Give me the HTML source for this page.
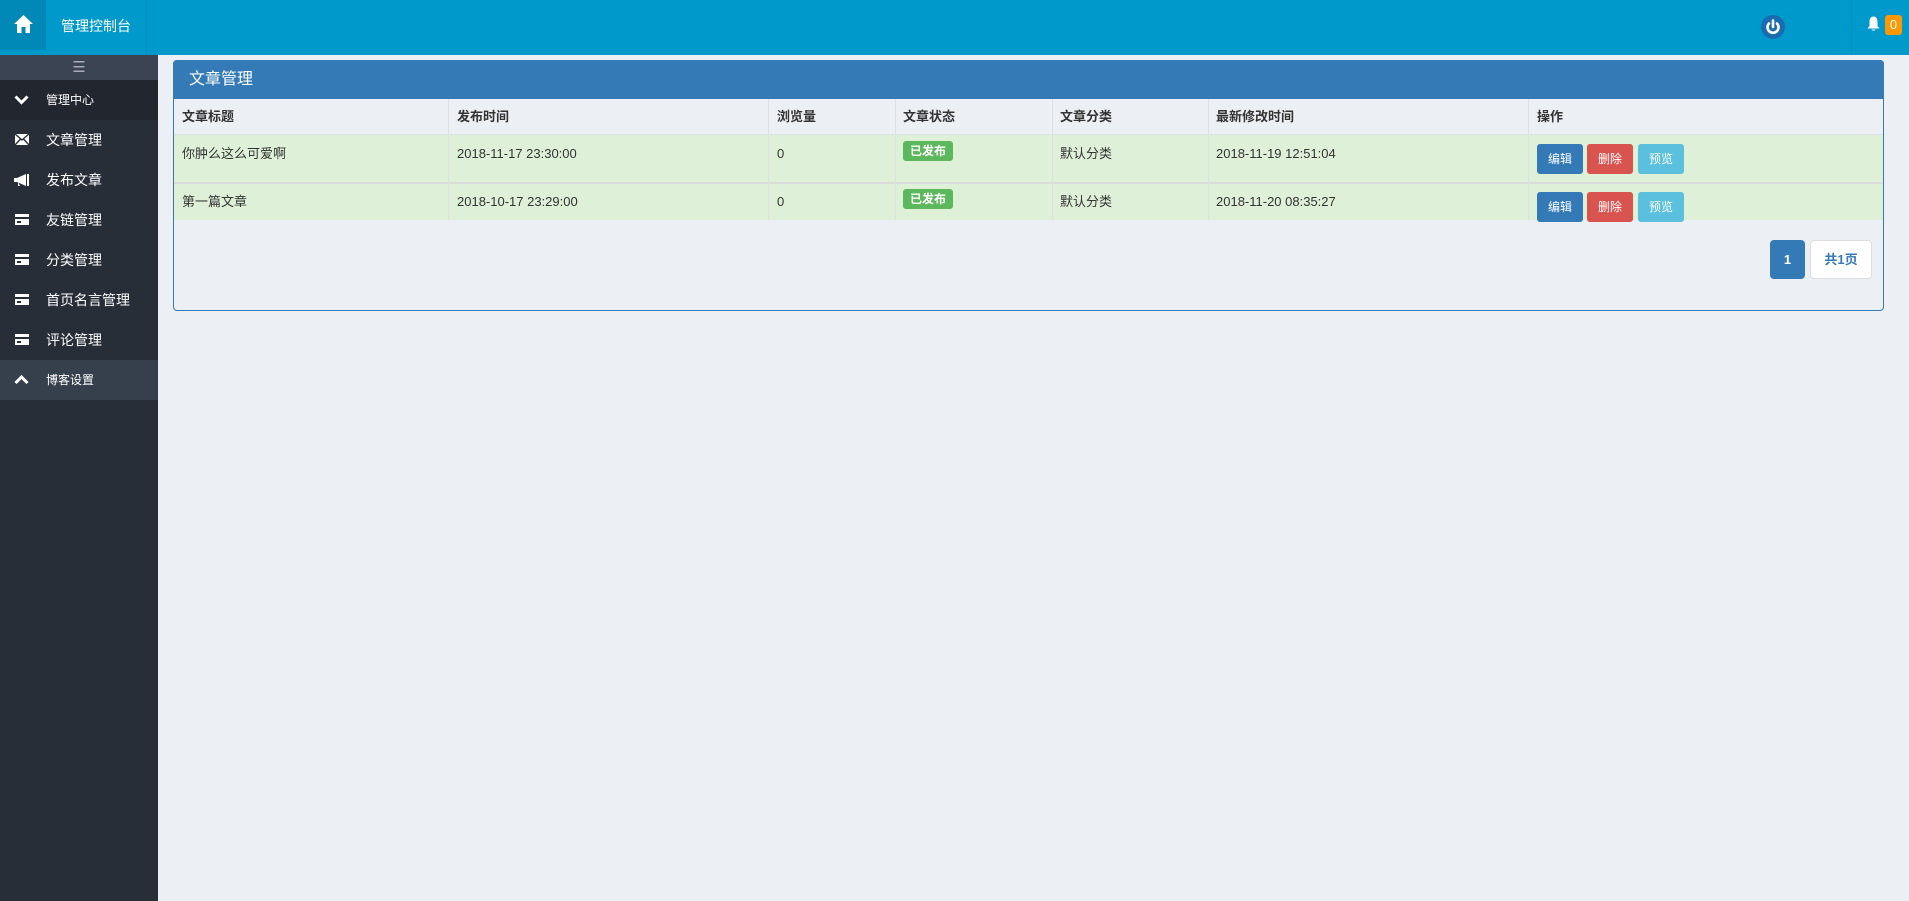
<!DOCTYPE html>
<html><head><meta charset="utf-8"><style>
*{margin:0;padding:0;box-sizing:border-box}
body{width:1909px;height:901px;background:#eceff4;font-family:"Liberation Sans","Noto Sans CJK SC",sans-serif;font-size:14px;color:#333;position:relative;overflow:hidden}
.a{position:absolute}
#top{left:0;top:0;width:1909px;height:55px;background:#0099cc}
#side{left:0;top:55px;width:158px;height:846px;background:#272e38}
.item{position:absolute;left:0;width:158px;height:40px;color:#fff;font-size:14px;line-height:40px}
.item span{position:absolute;left:46px}
.ic{position:absolute;left:15px;top:14px;width:14px;height:11px;background:#fff}
.ic:after{content:"";position:absolute;left:0;top:3px;width:14px;height:2px;background:#272e38}
.ic:before{content:"";position:absolute;left:2px;top:7px;width:4px;height:2px;background:#272e38}
.th{position:absolute;top:99px;height:36px;line-height:36px;font-weight:bold;font-size:13px}
.td{position:absolute;font-size:13px;line-height:20px}
.btn{position:absolute;width:46px;height:30px;border-radius:3px;color:#fff;font-size:12px;line-height:30px;text-align:center}
.vl{position:absolute;top:99px;width:1px;height:121px;background:#dde1e6}
</style></head><body>
<div id="top" class="a"></div>
<div class="a" style="left:0;top:0;width:46px;height:50px;background:#0088b6"></div>
<svg class="a" style="left:13px;top:14px" width="21" height="20" viewBox="0 0 21 20"><path d="M10.5 1 L20 10 L17 10 L17 19 L12.5 19 L12.5 13 L8.5 13 L8.5 19 L4 19 L4 10 L1 10 Z" fill="#fff"/></svg>
<div class="a" style="left:61px;top:16px;color:#fff;font-size:14px">管理控制台</div>
<div class="a" style="left:146px;top:0;width:1px;height:55px;background:#0a8dbb"></div>
<div class="a" style="left:1851px;top:0;width:1px;height:55px;background:#0a8dbb"></div>
<svg class="a" style="left:1761px;top:15px" width="24" height="24" viewBox="0 0 24 24"><circle cx="12" cy="12" r="12" fill="#1a6cb0"/><path d="M8 8.5 A5.5 5.5 0 1 0 16 8.5" fill="none" stroke="#fff" stroke-width="2.6" stroke-linecap="round"/><line x1="12" y1="5.5" x2="12" y2="12" stroke="#fff" stroke-width="2.6" stroke-linecap="round"/></svg>
<svg class="a" style="left:1867px;top:16px" width="13" height="16" viewBox="0 0 13 16"><path d="M6.5 0.5 C3.5 0.5 2.5 3 2.5 6 L2.5 10 L0.5 12.5 L12.5 12.5 L10.5 10 L10.5 6 C10.5 3 9.5 0.5 6.5 0.5Z M4.5 13.5 L8.5 13.5 C8.5 15 4.5 15 4.5 13.5Z" fill="#fff"/></svg>
<div class="a" style="left:1885px;top:15px;width:17px;height:20px;background:#ff9800;border-radius:3px;color:#fff;font-size:13px;line-height:20px;text-align:center">0</div>

<div id="side" class="a"></div>
<div class="a" style="left:0;top:55px;width:158px;height:25px;background:#3a4452;color:#aab;text-align:center;line-height:25px;font-size:15px">☰</div>
<div class="item" style="top:80px;background:#22262e"><svg class="a" style="left:14px;top:15px" width="15" height="10" viewBox="0 0 15 10"><path d="M1.5 1.5 L7.5 7.5 L13.5 1.5" fill="none" stroke="#fff" stroke-width="3"/></svg><span style="font-size:12px">管理中心</span></div>
<div class="item" style="top:120px"><svg class="a" style="left:15px;top:14px" width="14" height="11" viewBox="0 0 14 11"><rect width="14" height="11" fill="#fff"/><path d="M0 0 L7 6 L14 0 M0 11 L5.5 5 M14 11 L8.5 5" stroke="#272e38" stroke-width="1.4" fill="none"/></svg><span>文章管理</span></div>
<div class="item" style="top:160px"><svg class="a" style="left:13px;top:14px" width="17" height="13" viewBox="0 0 17 13"><path d="M1 4 L4 4 L13 0 L13 12 L4 8 L1 8Z M14 0 L16 0 L16 12 L14 12Z M5 8 L7 12 L5 12Z" fill="#fff"/></svg><span>发布文章</span></div>
<div class="item" style="top:200px"><i class="ic"></i><span>友链管理</span></div>
<div class="item" style="top:240px"><i class="ic"></i><span>分类管理</span></div>
<div class="item" style="top:280px"><i class="ic"></i><span>首页名言管理</span></div>
<div class="item" style="top:320px"><i class="ic"></i><span>评论管理</span></div>
<div class="item" style="top:360px;background:#36404c"><svg class="a" style="left:14px;top:15px" width="15" height="10" viewBox="0 0 15 10"><path d="M1.5 8 L7.5 2 L13.5 8" fill="none" stroke="#fff" stroke-width="3"/></svg><span style="font-size:12px">博客设置</span></div>

<div class="a" style="left:173px;top:60px;width:1711px;height:251px;border:1px solid #337ab7;border-radius:4px;background:#eceff4"></div>
<div class="a" style="left:173px;top:60px;width:1711px;height:39px;background:#337ab7;border-radius:4px 4px 0 0;color:#fff;font-size:16px;line-height:39px;padding-left:16px">文章管理</div>
<div class="a" style="left:174px;top:135px;width:1709px;height:47px;background:#dff0d8"></div>
<div class="a" style="left:174px;top:182px;width:1709px;height:2px;background:#dcdcdc"></div>
<div class="a" style="left:174px;top:184px;width:1709px;height:36px;background:#dff0d8"></div>
<div class="a" style="left:174px;top:134px;width:1709px;height:1px;background:#dde1e6"></div>
<div class="vl" style="left:448px"></div><div class="vl" style="left:768px"></div><div class="vl" style="left:895px"></div><div class="vl" style="left:1052px"></div><div class="vl" style="left:1208px"></div><div class="vl" style="left:1528px"></div>

<div class="th" style="left:182px">文章标题</div><div class="th" style="left:457px">发布时间</div><div class="th" style="left:777px">浏览量</div><div class="th" style="left:903px">文章状态</div><div class="th" style="left:1060px">文章分类</div><div class="th" style="left:1216px">最新修改时间</div><div class="th" style="left:1537px">操作</div>

<div class="td" style="left:182px;top:144px">你肿么这么可爱啊</div><div class="td" style="left:457px;top:144px">2018-11-17 23:30:00</div><div class="td" style="left:777px;top:144px">0</div><div class="td" style="left:1060px;top:144px">默认分类</div><div class="td" style="left:1216px;top:144px">2018-11-19 12:51:04</div>
<div class="td" style="left:182px;top:192px">第一篇文章</div><div class="td" style="left:457px;top:192px">2018-10-17 23:29:00</div><div class="td" style="left:777px;top:192px">0</div><div class="td" style="left:1060px;top:192px">默认分类</div><div class="td" style="left:1216px;top:192px">2018-11-20 08:35:27</div>

<div class="a" style="left:903px;top:141px;width:50px;height:20px;background:#5cb85c;border-radius:3px;color:#fff;font-size:12px;font-weight:bold;line-height:20px;text-align:center">已发布</div>
<div class="a" style="left:903px;top:189px;width:50px;height:20px;background:#5cb85c;border-radius:3px;color:#fff;font-size:12px;font-weight:bold;line-height:20px;text-align:center">已发布</div>

<div class="btn" style="left:1537px;top:144px;background:#337ab7">编辑</div><div class="btn" style="left:1587px;top:144px;background:#d9534f">删除</div><div class="btn" style="left:1638px;top:144px;background:#5bc0de">预览</div>
<div class="btn" style="left:1537px;top:192px;background:#337ab7">编辑</div><div class="btn" style="left:1587px;top:192px;background:#d9534f">删除</div><div class="btn" style="left:1638px;top:192px;background:#5bc0de">预览</div>

<div class="a" style="left:1770px;top:240px;width:35px;height:39px;background:#337ab7;border-radius:4px;color:#fff;font-weight:bold;font-size:13px;line-height:39px;text-align:center">1</div>
<div class="a" style="left:1810px;top:240px;width:62px;height:39px;background:#fff;border:1px solid #ddd;border-radius:4px;color:#337ab7;font-weight:bold;font-size:13px;line-height:37px;text-align:center">共1页</div>
</body></html>
